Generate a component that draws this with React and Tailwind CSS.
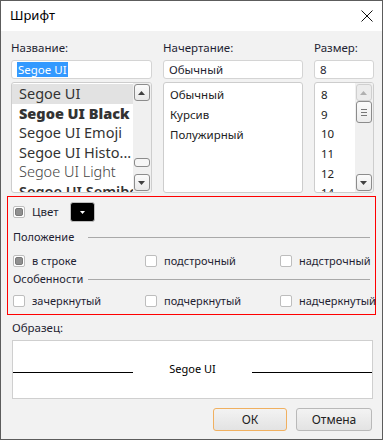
import React from 'react';

const font = { fontFamily: '"Noto Sans", "Open Sans", sans-serif' };

const ScrollBtn = ({ dir, disabled }) => (
  <div
    className={`w-[16px] h-[17px] rounded-[3px] border flex items-center justify-center ${
      disabled ? 'border-[#cfcfcf] bg-[#ececec]' : 'border-[#8c8c8c] bg-gradient-to-b from-[#fbfbfb] to-[#e9e9e9]'
    }`}
  >
    <svg width="7" height="4" viewBox="0 0 7 4">
      {dir === 'up' ? (
        <path d="M0 4 L3.5 0 L7 4 Z" fill={disabled ? '#b0b0b0' : '#404040'} />
      ) : (
        <path d="M0 0 L3.5 4 L7 0 Z" fill="#404040" />
      )}
    </svg>
  </div>
);

const Checkbox = ({ mixed }) => (
  <div className="w-[12px] h-[12px] rounded-[2px] border border-[#bdbdbd] bg-white flex items-center justify-center shrink-0">
    {mixed && <div className="w-[8px] h-[8px] rounded-[2px] bg-[#909090] border border-[#7a7a7a]" />}
  </div>
);

const Option = ({ mixed, label }) => (
  <div className="flex items-center gap-[7px] whitespace-nowrap">
    <Checkbox mixed={mixed} />
    <span>{label}</span>
  </div>
);

const Divider = ({ label }) => (
  <div className="flex items-center pr-[5px]">
    <span className="w-[75px]">{label}</span>
    <div className="flex-1 h-px bg-[#a9a9a9]" />
  </div>
);

export default function App() {
  const fonts = [
    { name: 'Segoe UI', cls: '' },
    { name: 'Segoe UI Black', cls: 'font-black' },
    { name: 'Segoe UI Emoji', cls: '' },
    { name: 'Segoe UI Histo...', cls: '' },
    { name: 'Segoe UI Light', cls: 'font-light text-[#444]' },
    { name: 'Segoe UI Semibold', cls: 'font-semibold' },
  ];

  return (
    <div style={font} className="w-[383px] h-[440px] border border-[#5c5c5c] bg-[#f2f2f2] flex flex-col text-[11.5px] text-[#1f1f33] overflow-hidden">
      {/* title bar */}
      <div className="h-[30px] bg-white flex items-center justify-between pl-[9px] pr-[9px] shrink-0">
        <span className="text-[13px] text-black">Шрифт</span>
        <svg width="12" height="12" viewBox="0 0 12 12">
          <path d="M0.5 0.5 L11.5 11.5 M11.5 0.5 L0.5 11.5" stroke="#111" strokeWidth="1" />
        </svg>
      </div>

      {/* font pickers */}
      <div className="flex gap-[11px] pl-[10px] pt-[9px]">
        <div className="w-[141px] flex flex-col">
          <span className="h-[16px] leading-[16px]">Название:</span>
          <div className="mt-[4px] h-[19px] bg-white border border-[#d4d4d4] rounded-[3px] flex items-center pl-[5px]">
            <span className="bg-[#3399ff] text-white leading-[15px] px-px">Segoe UI</span>
          </div>
          <div className="mt-[3px] h-[111px] bg-white border border-[#cdcdcd] rounded-[3px] flex overflow-hidden">
            <div className="flex-1 flex flex-col pt-px overflow-hidden text-[14.5px] text-[#333]">
              {fonts.map((f, i) => (
                <div key={f.name} className={`h-[19.6px] leading-[19px] pl-[7px] whitespace-nowrap shrink-0 ${i === 0 ? 'bg-[#e2e2e2]' : ''} ${f.cls}`}>
                  {f.name}
                </div>
              ))}
            </div>
            <div className="w-[18px] bg-[#f0f0f0] flex flex-col items-center justify-between py-px pr-px">
              <ScrollBtn dir="up" />
              <div className="w-[16px] h-[9px] rounded-[3px] border border-[#8c8c8c] bg-[#f6f6f6] mt-[50px]" />
              <ScrollBtn dir="down" />
            </div>
          </div>
        </div>

        <div className="w-[140px] flex flex-col">
          <span className="h-[16px] leading-[16px]">Начертание:</span>
          <div className="mt-[4px] h-[19px] bg-white border border-[#d4d4d4] rounded-[3px] flex items-center pl-[5px]">
            Обычный
          </div>
          <div className="mt-[3px] h-[111px] bg-white border border-[#cdcdcd] rounded-[3px] flex flex-col pl-[6px] pt-[2px] text-[#222]">
            <span className="h-[20px] leading-[20px]">Обычный</span>
            <span className="h-[20px] leading-[20px]">Курсив</span>
            <span className="h-[20px] leading-[20px]">Полужирный</span>
          </div>
        </div>

        <div className="w-[60px] flex flex-col">
          <span className="h-[16px] leading-[16px]">Размер:</span>
          <div className="mt-[4px] h-[19px] bg-white border border-[#d4d4d4] rounded-[3px] flex items-center pl-[5px]">
            8
          </div>
          <div className="mt-[3px] h-[111px] bg-white border border-[#cdcdcd] rounded-[3px] flex overflow-hidden">
            <div className="flex-1 flex flex-col pl-[6px] pt-[2px] text-[#222] overflow-hidden">
              {['8', '9', '10', '11', '12', '14'].map((s) => (
                <span key={s} className="h-[19.7px] leading-[20px] shrink-0">{s}</span>
              ))}
            </div>
            <div className="w-[18px] bg-[#f0f0f0] flex flex-col items-center py-px pr-px">
              <ScrollBtn dir="up" disabled />
              <div className="w-[16px] h-[22px] rounded-[3px] border border-[#8c8c8c] bg-gradient-to-b from-[#fbfbfb] to-[#ececec] flex flex-col items-center justify-center gap-[2px]">
                <div className="w-[6px] h-px bg-[#777]" />
                <div className="w-[6px] h-px bg-[#777]" />
                <div className="w-[6px] h-px bg-[#777]" />
              </div>
              <div className="flex-1" />
              <ScrollBtn dir="down" />
            </div>
          </div>
        </div>
      </div>

      {/* effects */}
      <div className="mx-[6px] mt-[3px] h-[119px] border border-[#ff0000] flex flex-col pl-[5px] text-[11px]">
        <div className="flex items-center h-[27px] pt-[3px] text-[11.5px]">
          <Option mixed label="Цвет" />
          <div className="ml-[11px] w-[25px] h-[20px] bg-black rounded-[3px] border border-[#bdbdbd] flex items-center justify-center">
            <svg width="5" height="3" viewBox="0 0 5 3">
              <path d="M0 0 L2.5 3 L5 0 Z" fill="#fff" />
            </svg>
          </div>
        </div>
        <div className="mt-[5px] h-[16px] leading-[16px]">
          <Divider label="Положение" />
        </div>
        <div className="mt-[8px] h-[16px] grid grid-cols-[132px_135px_1fr] items-center">
          <Option mixed label="в строке" />
          <Option label="подстрочный" />
          <Option label="надстрочный" />
        </div>
        <div className="mt-[2px] h-[16px] leading-[16px]">
          <Divider label="Особенности" />
        </div>
        <div className="mt-[6px] h-[16px] grid grid-cols-[132px_135px_1fr] items-center">
          <Option label="зачеркнутый" />
          <Option label="подчеркнутый" />
          <Option label="надчеркнутый" />
        </div>
      </div>

      {/* sample */}
      <div className="ml-[11px] mr-[9px] mt-[5px] flex flex-col">
        <span className="h-[16px] leading-[16px]">Образец:</span>
        <div className="mt-[4px] h-[59px] bg-white border border-[#cfcfcf] flex items-center">
          <div className="w-[120px] h-px bg-black mt-[6px]" />
          <span className="flex-1 text-center text-[11px] text-black">Segoe UI</span>
          <div className="w-[120px] h-px bg-black mt-[6px]" />
        </div>
      </div>

      {/* buttons */}
      <div className="flex justify-end gap-[9px] mr-[10px] mt-[9px]">
        <button className="w-[74px] h-[23px] rounded-[3px] border border-[#f0b060] bg-gradient-to-b from-[#f3f3f3] to-[#e3e3e3] text-[12px] text-[#222]">
          ОК
        </button>
        <button className="w-[76px] h-[23px] rounded-[3px] border border-[#b9b9b9] bg-gradient-to-b from-[#f3f3f3] to-[#e3e3e3] text-[12px] text-[#222]">
          Отмена
        </button>
      </div>
    </div>
  );
}
